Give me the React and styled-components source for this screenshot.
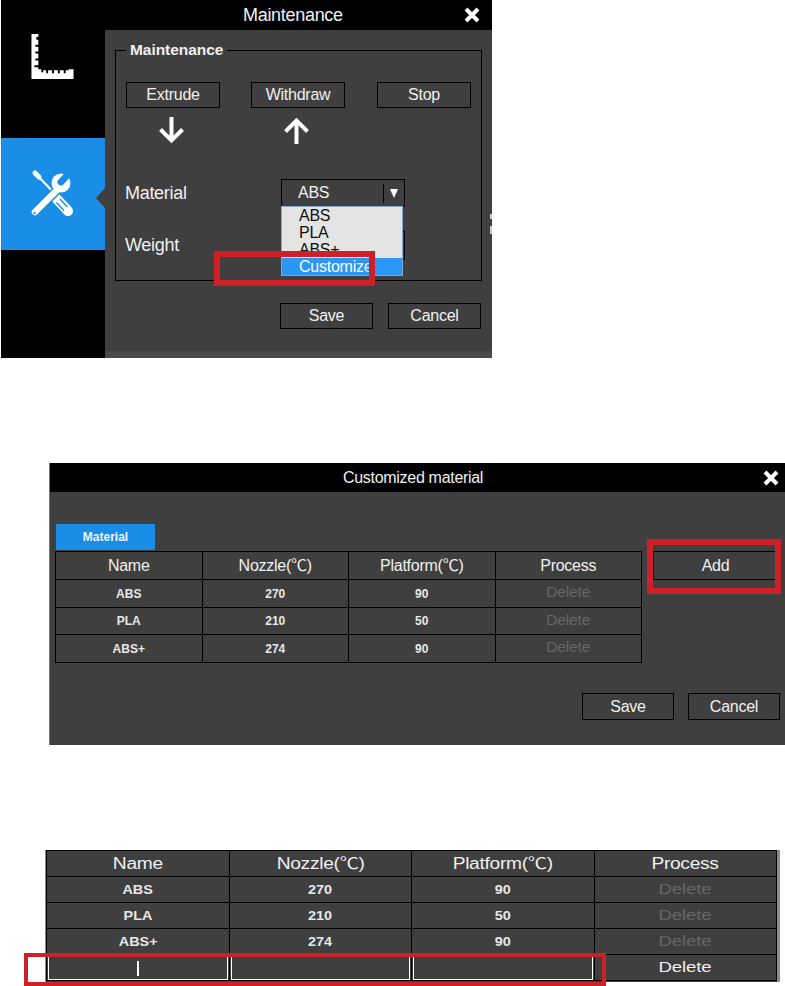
import React from 'react';
import styled, { createGlobalStyle } from 'styled-components';

const GlobalStyle = createGlobalStyle`
    html, body {
        margin: 0;
        padding: 0;
        background: #fff;
    }
    body {
        font-family: "Liberation Sans", Arial, "Noto Sans CJK SC", sans-serif;
        color: #f0f0f0;
    }
    * {
        box-sizing: border-box;
    }
`;

const DARK = '#3f3f3f';
const BLUE = '#1a8ee6';

const Page = styled.div`
    width: 785px;
    min-height: 986px;
    display: flex;
    flex-direction: column;
`;

const Highlight = styled.div`
    position: absolute;
    z-index: 3;
    left: ${p => p.$left}px;
    top: ${p => p.$top}px;
    width: ${p => p.$width}px;
    height: ${p => p.$height}px;
    border: ${p => p.$thick}px solid #cf2027;
    pointer-events: none;
`;

const MaintenancePanel = styled.section`
    position: relative;
    width: 491px;
    height: 358px;
    margin-left: 1px;
    background: #000;
    display: flex;
    flex-direction: column;
`;

const EdgeMark = styled.span`
    position: absolute;
    right: 0;
    top: ${p => p.$top}px;
    width: 2px;
    height: ${p => p.$height}px;
    background: #c8c8c8;
`;

const TitleBar = styled.header`
    height: ${p => p.$height}px;
    flex: none;
    background: #000;
    display: flex;
    align-items: center;
    padding-left: ${p => p.$titleLeft}px;
    padding-right: ${p => p.$closeRight}px;
    font-size: ${p => p.$size}px;
    letter-spacing: -0.3px;
`;

const CloseIcon = styled.svg`
    margin-left: auto;
    width: 16px;
    height: 16px;
`;

const PanelBody = styled.div`
    flex: 1;
    display: flex;
    min-height: 0;
`;

const Sidebar = styled.nav`
    width: 104px;
    flex: none;
    display: flex;
    flex-direction: column;
`;

const SideItem = styled.div`
    position: relative;
    height: ${p => p.$height}px;
    background: ${p => (p.$active ? BLUE : '#000')};
    padding-left: ${p => p.$iconLeft}px;
    padding-top: ${p => p.$iconTop}px;
    svg {
        display: block;
        overflow: visible;
    }
    ${p => p.$active && `
        &::after {
            content: '';
            position: absolute;
            right: 0;
            top: 50px;
            border-style: solid;
            border-width: 10px 9px 10px 0;
            border-color: transparent ${DARK} transparent transparent;
        }
    `}
`;

const Content = styled.main`
    flex: 1;
    background: ${DARK};
    display: flex;
    flex-direction: column;
    padding-left: 10px;
`;

const Group = styled.fieldset`
    margin: 11px 0 0;
    padding: 0;
    width: 367px;
    height: 240px;
    border: 1px solid #000;
`;

const GroupTitle = styled.legend`
    margin-left: 10px;
    padding: 0 4px;
    font-size: 15.5px;
    font-weight: 700;
    line-height: 18px;
    letter-spacing: -0.05px;
`;

const Actions = styled.div`
    display: grid;
    grid-template-columns: 125px 126px 94px;
    padding: 23px 0 0 10px;
`;

const ActionColumn = styled.div`
    display: flex;
    flex-direction: column;
    align-items: flex-start;
    gap: 9px;
    svg {
        margin-left: 32px;
    }
`;

const OutlineButton = styled.button`
    width: ${p => p.$width}px;
    height: ${p => p.$height}px;
    background: transparent;
    border: 1px solid #000;
    color: #f0f0f0;
    font-family: inherit;
    font-size: 16px;
    letter-spacing: -0.25px;
    padding: 0;
`;

const FormGrid = styled.div`
    display: grid;
    grid-template-columns: 156px 124px;
    grid-template-rows: 28px 29px;
    row-gap: 24px;
    padding: ${p => p.$top}px 0 0 9px;
    align-items: center;
`;

const FormLabel = styled.label`
    font-size: 18px;
    letter-spacing: -0.3px;
`;

const SelectWrap = styled.div`
    position: relative;
    height: 28px;
`;

const SelectBox = styled.div`
    height: 100%;
    border: 1px solid #000;
    display: flex;
    align-items: center;
    padding-left: 16px;
    font-size: 16px;
    letter-spacing: -0.25px;
`;

const SelectCaret = styled.span`
    margin-left: auto;
    width: 21px;
    height: 19px;
    border-left: 1px solid #000;
    display: flex;
    align-items: center;
    justify-content: center;
    &::before {
        content: '';
        border-style: solid;
        border-width: 9px 4px 0;
        border-color: #fff transparent transparent;
    }
`;

const DropdownList = styled.ul`
    position: absolute;
    z-index: 2;
    left: 0;
    top: 27px;
    width: 122px;
    height: 70px;
    margin: 0;
    padding: 0;
    list-style: none;
    background: #e4e4e4;
    border: 1px solid #7fa8cc;
    overflow: hidden;
    display: flex;
    flex-direction: column;
`;

const DropdownOption = styled.li`
    height: ${p => p.$height}px;
    flex: none;
    line-height: 17px;
    padding-left: 17px;
    font-size: 16px;
    letter-spacing: -0.25px;
    color: ${p => (p.$selected ? '#fff' : '#111')};
    background: ${p => (p.$selected ? '#2b96f5' : 'transparent')};
`;

const WeightInput = styled.div`
    height: 29px;
    border: 1px solid #000;
`;

const Footer = styled.footer`
    display: flex;
    justify-content: flex-end;
    gap: ${p => p.$gap}px;
    padding: ${p => p.$top}px ${p => p.$right}px 0 0;
`;

const BottomStrip = styled.div`
    margin: auto 0 0 -10px;
    height: 7px;
    background: #4a4a4a;
`;

const MaterialPanel = styled.section`
    position: relative;
    width: 736px;
    height: 282px;
    margin-top: 105px;
    margin-left: 49px;
    background: ${DARK};
    border-left: 1px solid #777;
    display: flex;
    flex-direction: column;
`;

const MaterialBody = styled.div`
    padding: 32px 0 0 5px;
`;

const Tab = styled.div`
    margin-left: 1px;
    width: 99px;
    height: 26px;
    background: ${BLUE};
    display: flex;
    align-items: center;
    justify-content: center;
    font-size: 12px;
    font-weight: 700;
    color: #eaf4fc;
`;

const TableRow = styled.div`
    margin-top: 1px;
    display: flex;
    gap: 11px;
    align-items: flex-start;
`;

const Table = styled.table`
    width: ${p => p.$width}px;
    flex: none;
    table-layout: fixed;
    border-collapse: collapse;
    text-align: center;
`;

const Row = styled.tr`
    height: ${p => p.$height}px;
`;

const HeadCell = styled.th`
    padding: 0;
    border: 1px solid #000;
    font-size: 16px;
    line-height: 18px;
    letter-spacing: -0.25px;
    font-weight: 400;
`;

const Cell = styled.td`
    padding: 0;
    border: 1px solid #000;
    font-size: 12px;
    font-weight: 700;
    color: #e8e8e8;
`;

const DeleteCell = styled.td`
    padding: 0 0 ${p => p.$bottom}px;
    border: 1px solid #000;
    font-size: 15.5px;
    letter-spacing: -0.15px;
    color: ${p => (p.$enabled ? '#f0f0f0' : '#666')};
`;

const AddButton = styled.button`
    width: 125px;
    height: 29px;
    background: transparent;
    border: 1px solid #000;
    color: #f0f0f0;
    font-family: inherit;
    font-size: 16px;
    letter-spacing: -0.25px;
    padding: 0;
`;

const EditPanel = styled.section`
    position: relative;
    width: 735px;
    height: 132px;
    margin-top: 105px;
    margin-left: 45px;
    background: ${DARK};
    border-left: 1px solid #8a8a8a;
    border-right: 3px solid #8a8a8a;
`;

const Wide = styled.span`
    display: inline-block;
    transform: scaleX(1.2);
`;

const EditInput = styled.div`
    height: 24px;
    margin: 1px 1px 0;
    border: 1px solid #fff;
    border-top-color: #aaa;
    display: flex;
    align-items: center;
    justify-content: center;
`;

const TextCaret = styled.span`
    width: 2px;
    height: 15px;
    background: #fff;
`;

const EditCell = styled.td`
    padding: 0;
    border: 1px solid #000;
`;

const rows = [
    { name: 'ABS', nozzle: 270, platform: 90 },
    { name: 'PLA', nozzle: 210, platform: 50 },
    { name: 'ABS+', nozzle: 274, platform: 90 },
];

const headers = ['Name', 'Nozzle(℃)', 'Platform(℃)', 'Process'];

function Close() {
    return (
        <CloseIcon viewBox="0 0 16 16">
            <path d="M2 2 L14 14 M14 2 L2 14" stroke="#fff" strokeWidth="4" fill="none" />
        </CloseIcon>
    );
}

function RulerIcon() {
    return (
        <svg width="43" height="45" viewBox="0 0 43 46">
            <path
                fill="#fff"
                d="M0 0H7V3H5V6H7V11H4V13H7V18H4V20H7V25H4V27H7V32H3V34H7V36H10V39H12V37H15V40H17V37H21V40H23V37H27V40H29V37H33V40H35V37H38V36H43V46H0Z"
            />
        </svg>
    );
}

function ToolsIcon() {
    return (
        <svg width="46" height="48" viewBox="0 0 46 48">
            <path d="M4 2 L8 6" stroke="#fff" strokeWidth="5" strokeLinecap="round" />
            <path d="M6 4 L24 23" stroke="#fff" strokeWidth="2" />
            <path d="M25 27 L37 40" stroke="#fff" strokeWidth="10" strokeLinecap="round" />
            <path d="M25.5 31.5 L33 39.5 M29 28 L36.5 36" stroke={BLUE} strokeWidth="1.4" />
            <path d="M4 41 L27 18" stroke={BLUE} strokeWidth="9.5" />
            <path d="M4 41 L27 18" stroke="#fff" strokeWidth="6.5" strokeLinecap="round" />
            <circle cx="30" cy="12" r="9.5" fill="#fff" />
            <path d="M30 11 L42 -2" stroke={BLUE} strokeWidth="7" strokeLinecap="round" />
            <circle cx="3.5" cy="42" r="1.2" fill={BLUE} />
        </svg>
    );
}

function ArrowIcon({ up }) {
    return (
        <svg width="27" height="27" viewBox="0 0 27 27">
            <path
                d={up ? 'M13.5 27V4 M2.5 14.5 L13.5 3.5 L24.5 14.5' : 'M13.5 0V23 M2.5 12.5 L13.5 23.5 L24.5 12.5'}
                stroke="#fff"
                strokeWidth="4"
                fill="none"
            />
        </svg>
    );
}

function Maintenance() {
    return (
        <MaintenancePanel>
            <TitleBar $height={30} $titleLeft={242} $closeRight={12} $size={18}>
                Maintenance
                <Close />
            </TitleBar>
            <PanelBody>
                <Sidebar>
                    <SideItem $height={108} $iconLeft={30} $iconTop={4}>
                        <RulerIcon />
                    </SideItem>
                    <SideItem $height={112} $iconLeft={30} $iconTop={33} $active>
                        <ToolsIcon />
                    </SideItem>
                </Sidebar>
                <Content>
                    <Group>
                        <GroupTitle>Maintenance</GroupTitle>
                        <Actions>
                            <ActionColumn>
                                <OutlineButton $width={94} $height={26}>Extrude</OutlineButton>
                                <ArrowIcon />
                            </ActionColumn>
                            <ActionColumn>
                                <OutlineButton $width={94} $height={26}>Withdraw</OutlineButton>
                                <ArrowIcon up />
                            </ActionColumn>
                            <ActionColumn>
                                <OutlineButton $width={94} $height={26}>Stop</OutlineButton>
                            </ActionColumn>
                        </Actions>
                        <FormGrid $top={35}>
                            <FormLabel>Material</FormLabel>
                            <SelectWrap>
                                <SelectBox>
                                    ABS
                                    <SelectCaret />
                                </SelectBox>
                                <DropdownList>
                                    <DropdownOption $height={17}>ABS</DropdownOption>
                                    <DropdownOption $height={17}>PLA</DropdownOption>
                                    <DropdownOption $height={17}>ABS+</DropdownOption>
                                    <DropdownOption $height={18} $selected>Customize</DropdownOption>
                                </DropdownList>
                            </SelectWrap>
                            <FormLabel>Weight</FormLabel>
                            <WeightInput />
                        </FormGrid>
                    </Group>
                    <Footer $gap={15} $top={22} $right={11}>
                        <OutlineButton $width={93} $height={26}>Save</OutlineButton>
                        <OutlineButton $width={93} $height={26}>Cancel</OutlineButton>
                    </Footer>
                    <BottomStrip />
                </Content>
            </PanelBody>
            <EdgeMark $top={214} $height={5} />
            <EdgeMark $top={226} $height={8} />
            <Highlight $left={213} $top={251} $width={161} $height={35} $thick={6} />
        </MaintenancePanel>
    );
}

function CustomizedMaterial() {
    const heights = [28, 28, 27, 28];
    return (
        <MaterialPanel>
            <TitleBar $height={29} $titleLeft={293} $closeRight={6} $size={16}>
                Customized material
                <Close />
            </TitleBar>
            <MaterialBody>
                <Tab>Material</Tab>
                <TableRow>
                    <Table $width={587}>
                        <thead>
                            <Row $height={heights[0]}>
                                {headers.map(h => <HeadCell key={h}>{h}</HeadCell>)}
                            </Row>
                        </thead>
                        <tbody>
                            {rows.map((row, i) => (
                                <Row key={row.name} $height={heights[i + 1]}>
                                    <Cell>{row.name}</Cell>
                                    <Cell>{row.nozzle}</Cell>
                                    <Cell>{row.platform}</Cell>
                                    <DeleteCell $bottom={3}>Delete</DeleteCell>
                                </Row>
                            ))}
                        </tbody>
                    </Table>
                    <AddButton>Add</AddButton>
                </TableRow>
                <Footer $gap={14} $top={30} $right={5}>
                    <OutlineButton $width={92} $height={27}>Save</OutlineButton>
                    <OutlineButton $width={92} $height={27}>Cancel</OutlineButton>
                </Footer>
            </MaterialBody>
            <Highlight $left={597} $top={76} $width={134} $height={55} $thick={6} />
        </MaterialPanel>
    );
}

function EditingTable() {
    return (
        <EditPanel>
            <Table $width={731}>
                <thead>
                    <Row $height={26}>
                        {headers.map(h => <HeadCell key={h}><Wide>{h}</Wide></HeadCell>)}
                    </Row>
                </thead>
                <tbody>
                    {rows.map(row => (
                        <Row key={row.name} $height={26}>
                            <Cell><Wide>{row.name}</Wide></Cell>
                            <Cell><Wide>{row.nozzle}</Wide></Cell>
                            <Cell><Wide>{row.platform}</Wide></Cell>
                            <DeleteCell $bottom={1}><Wide>Delete</Wide></DeleteCell>
                        </Row>
                    ))}
                    <Row $height={26}>
                        <EditCell><EditInput><TextCaret /></EditInput></EditCell>
                        <EditCell><EditInput /></EditCell>
                        <EditCell><EditInput /></EditCell>
                        <DeleteCell $bottom={1} $enabled><Wide>Delete</Wide></DeleteCell>
                    </Row>
                </tbody>
            </Table>
            <Highlight $left={-22} $top={103} $width={582} $height={33} $thick={4} />
        </EditPanel>
    );
}

export default function App() {
    return (
        <Page>
            <GlobalStyle />
            <Maintenance />
            <CustomizedMaterial />
            <EditingTable />
        </Page>
    );
}
